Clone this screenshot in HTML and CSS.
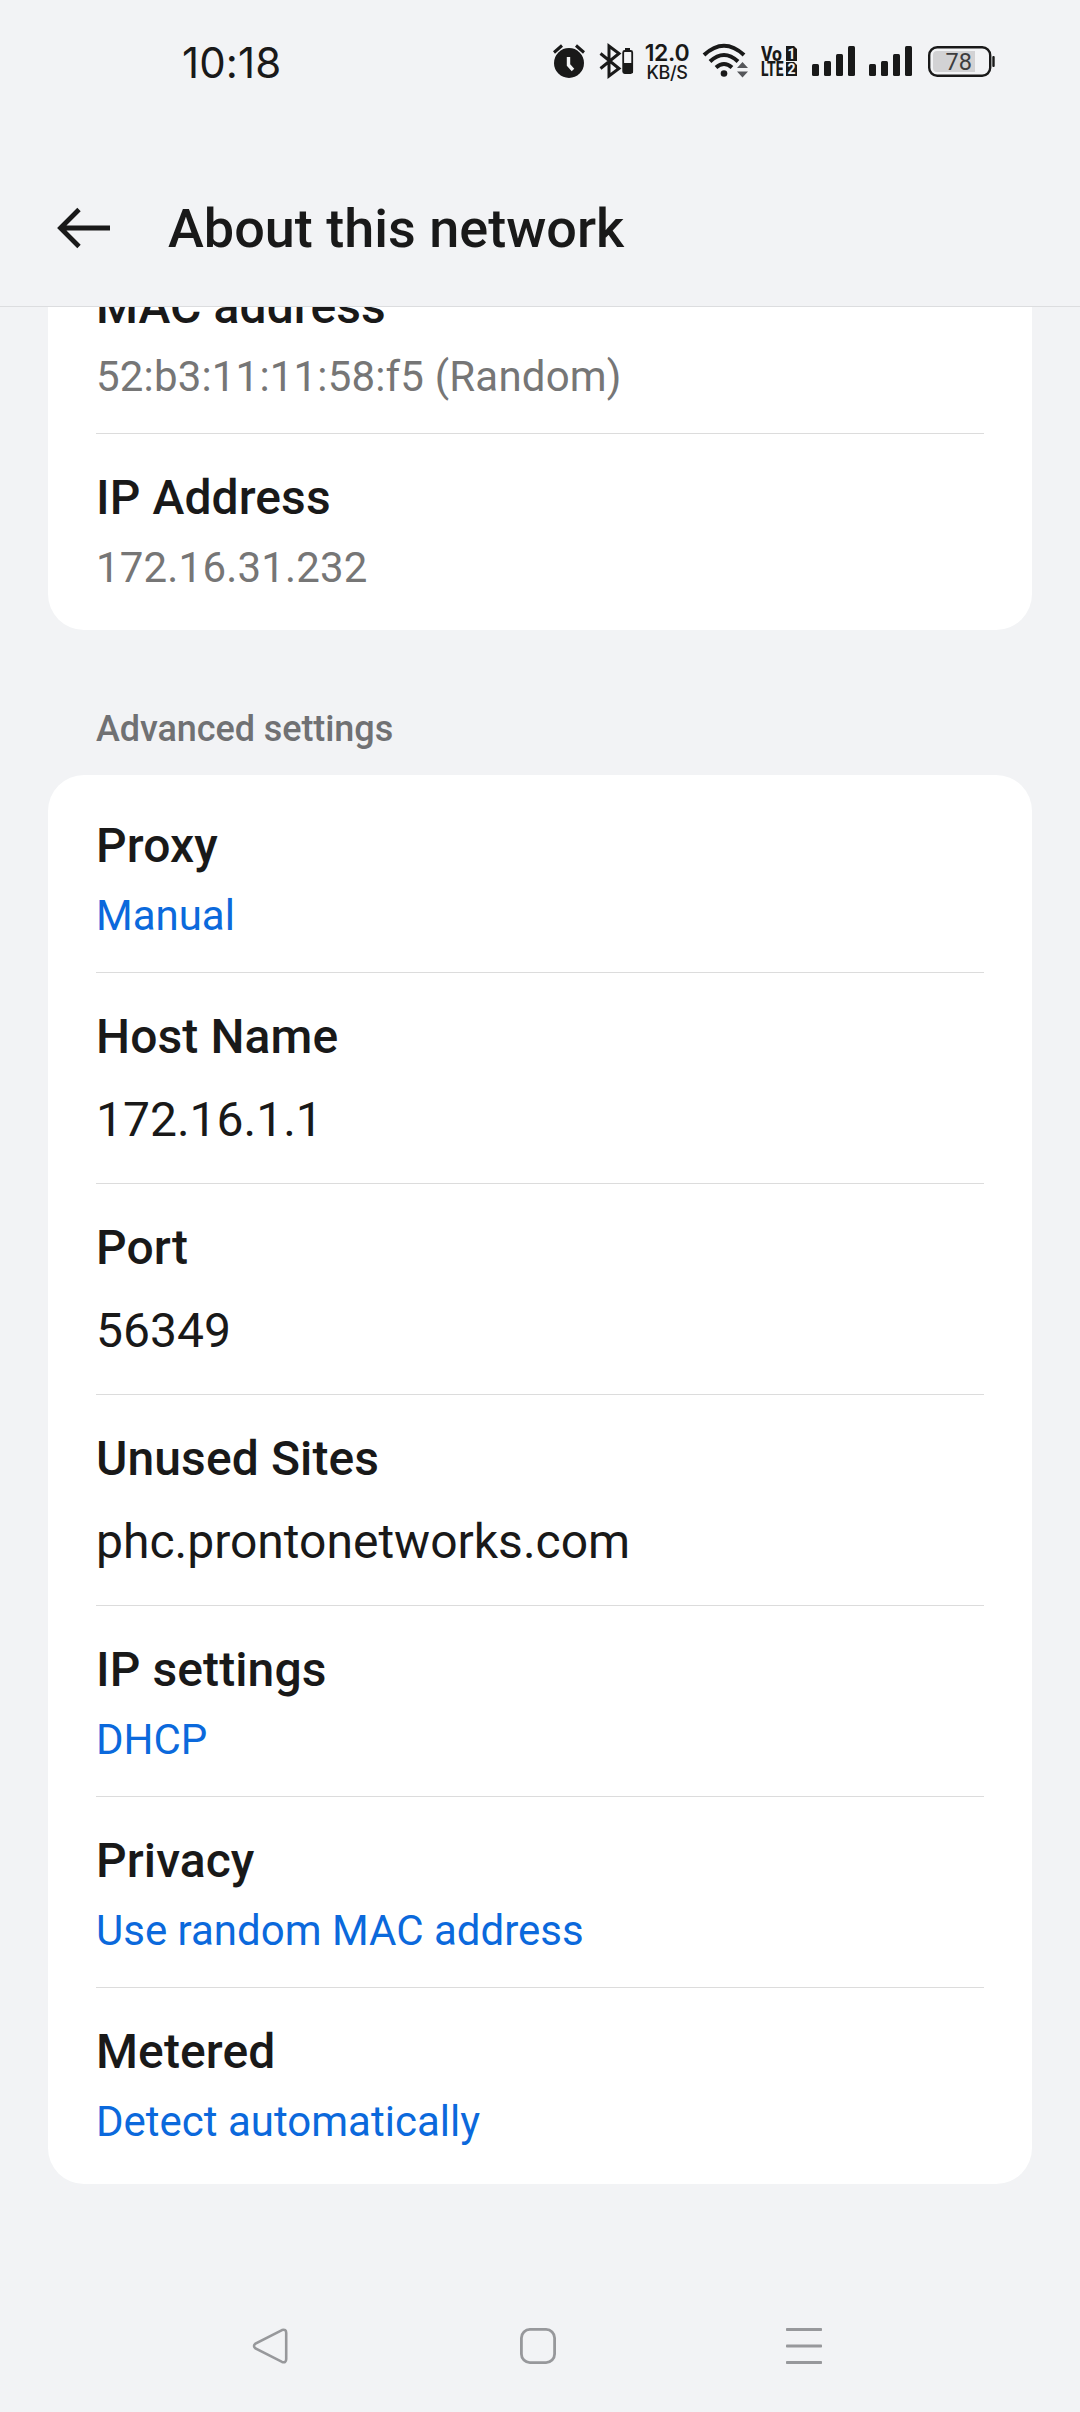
FILE: index.html
```html
<!DOCTYPE html>
<html lang="en">
<head>
<meta charset="utf-8">
<title>About this network</title>
<link rel="stylesheet" href="styles.css">
</head>
<body>
<div class="screen">
  <header class="status">
    <div class="clock">10:18</div>
    <div class="status-icons">
      <svg class="ic-alarm" width="34" height="40" viewBox="0 0 34 40" fill="none">
        <circle cx="17" cy="23" r="15" fill="#191919"/>
        <path d="M2 12.5 10 5.500M24 5.500 32 12.500" stroke="#191919" stroke-width="3"/>
        <path d="M16.500 17v8l4.500 5" stroke="#f2f3f5" stroke-width="3.400"/>
      </svg>
      <svg class="ic-bt" width="36" height="40" viewBox="0 0 36 40" fill="none">
        <path d="M1.500 13.500 20 28.500 10 36V6L20 13.500 1.500 28.500" stroke="#191919" stroke-width="3"/>
        <path d="M26 8h5v3h-5z" fill="#191919"/>
        <rect x="24.200" y="11" width="9" height="22" rx="1.500" stroke="#191919" stroke-width="1.800"/>
        <path d="M24 23h10v10H24z" fill="#191919"/>
      </svg>
      <div class="speed"><span class="speed-num">12.0</span><span class="speed-unit">KB/S</span></div>
      <svg class="ic-wifi" width="46" height="40" viewBox="0 0 46 40" fill="none">
        <path d="M2 15Q22 -3.500 42 15M8 21.500Q22 8.500 36 21.500M14 27.500Q22 20.500 30 27.500" stroke="#191919" stroke-width="4"/>
        <circle cx="22" cy="33.500" r="3.300" fill="#191919"/>
        <path d="M35 28l5.500-6 5.500 6zM35 31.500l5.500 6 5.500-6z" fill="#55565a"/>
      </svg>
      <svg class="ic-volte" width="36" height="40" viewBox="0 0 36 40">
        <text class="volte-text" x="0" y="20.500" textLength="21" lengthAdjust="spacingAndGlyphs">Vo</text>
        <text class="volte-text" x="0" y="36" textLength="22.500" lengthAdjust="spacingAndGlyphs">LTE</text>
        <path d="M25 6h8l3 3v12H25zM25 22h8l3 3v11H25z" fill="#191919"/>
        <text class="sim-text" x="30.500" y="18.500">1</text>
        <text class="sim-text" x="30.500" y="34">2</text>
      </svg>
      <svg class="ic-signal" width="43" height="40" viewBox="0 0 43 40" fill="#191919">
        <rect x="0" y="24" width="7" height="12" rx="1.500"/><rect x="12" y="21" width="7" height="15" rx="1.500"/><rect x="24" y="14" width="7" height="22" rx="1.500"/><rect x="36" y="6" width="7" height="30" rx="1.500"/>
      </svg>
      <svg class="ic-signal" width="43" height="40" viewBox="0 0 43 40" fill="#191919">
        <rect x="0" y="24" width="7" height="12" rx="1.500"/><rect x="12" y="21" width="7" height="15" rx="1.500"/><rect x="24" y="14" width="7" height="22" rx="1.500"/><rect x="36" y="6" width="7" height="30" rx="1.500"/>
      </svg>
      <svg class="ic-battery" width="67" height="40" viewBox="0 0 67 40">
        <rect x="1.200" y="7.200" width="61" height="28.600" rx="8" fill="none" stroke="#191919" stroke-width="2.400"/>
        <path d="M9 11h38v21H9a4 4 0 0 1-4-4V15a4 4 0 0 1 4-4z" fill="#d2d2d4"/>
        <rect x="64.300" y="16" width="2.400" height="11" rx="1" fill="#191919"/>
        <text class="battery-text" x="30.700" y="30">78</text>
      </svg>
    </div>
  </header>

  <div class="appbar">
    <svg class="back" width="54" height="44" viewBox="0 0 54 44" fill="none" stroke="#191919" stroke-width="4.800">
      <path d="M3 22H53M22 3.500 3.500 22 22 40.500"/>
    </svg>
    <h1 class="title">About this network</h1>
  </div>

  <main class="content">
    <section class="card card-scrolled">
      <div class="row"><div class="label">MAC address</div><div class="sub">52:b3:11:11:58:f5 (Random)</div></div>
      <div class="row"><div class="label">IP Address</div><div class="sub">172.16.31.232</div></div>
    </section>
    <h2 class="section">Advanced settings</h2>
    <section class="card">
      <div class="row"><div class="label">Proxy</div><div class="sub link">Manual</div></div>
      <div class="row row-field"><div class="label">Host Name</div><div class="value">172.16.1.1</div></div>
      <div class="row row-field"><div class="label">Port</div><div class="value">56349</div></div>
      <div class="row row-field"><div class="label">Unused Sites</div><div class="value">phc.prontonetworks.com</div></div>
      <div class="row"><div class="label">IP settings</div><div class="sub link">DHCP</div></div>
      <div class="row"><div class="label">Privacy</div><div class="sub link">Use random MAC address</div></div>
      <div class="row"><div class="label">Metered</div><div class="sub link">Detect automatically</div></div>
    </section>
  </main>

  <nav class="navbar">
    <svg width="36" height="36" viewBox="0 0 36 36" fill="none" stroke="#97989b" stroke-width="2.600">
      <path d="M30 2.100 3.500 15.600Q.500 18 3.500 20.400L30 33.900Q34.200 35.200 34.200 31V5Q34.200 .8 30 2.100z"/>
    </svg>
    <svg width="36" height="36" viewBox="0 0 36 36" fill="none" stroke="#97989b" stroke-width="2.800">
      <rect x="1.400" y="1.400" width="33.200" height="33.200" rx="8.500"/>
    </svg>
    <svg width="36" height="36" viewBox="0 0 36 36" fill="#97989b">
      <rect width="36" height="3" rx=".8"/><rect y="16.400" width="36" height="3.200" rx=".8"/><rect y="33" width="36" height="3" rx=".8"/>
    </svg>
  </nav>
</div>
</body>
</html>
```
FILE: styles.css
```css
* { box-sizing: border-box; }

body {
  margin: 0;
  background: #f2f3f5;
  color: #191919;
  font-family: Roboto, "Noto Sans", sans-serif;
}

.screen {
  display: flex;
  flex-direction: column;
  width: 1080px;
  height: 2412px;
  overflow: hidden;
}

svg { display: block; flex: none; }

.status {
  display: flex;
  justify-content: space-between;
  height: 150px;
  padding: 40px 85px 0 182px;
}

.clock {
  height: 45px;
  line-height: 45px;
  font-family: Inter, Roboto, sans-serif;
  font-size: 42px;
  letter-spacing: 0.1px;
}

.status-icons { display: flex; height: 40px; }
.ic-bt { margin-left: 13px; }
.speed {
  display: flex;
  flex-direction: column;
  align-items: center;
  width: 46px;
  margin-left: 9px;
  white-space: nowrap;
  font-family: Inter, Roboto, sans-serif;
}
.speed-num { height: 22px; line-height: 27px; font-size: 23px; font-weight: 600; letter-spacing: -0.3px; }
.speed-unit { height: 18px; line-height: 22px; font-size: 18px; font-weight: 500; letter-spacing: -0.4px; }
.ic-wifi { margin-left: 12px; }
.ic-volte { margin-left: 13px; }
.ic-signal { margin-left: 14px; }
.ic-volte + .ic-signal { margin-left: 15px; }
.ic-battery { margin-left: 16px; }

.volte-text { font-size: 20px; font-weight: 800; fill: #191919; }
.sim-text { font-size: 14px; font-weight: 700; fill: #f2f3f5; text-anchor: middle; }
.battery-text { font-size: 23.5px; fill: #3c3c3e; text-anchor: middle; }

.appbar {
  display: flex;
  align-items: center;
  height: 157px;
  padding: 0 57px 1px;
  border-bottom: 1px solid #dcdddf;
}
.title {
  margin: 2px 0 0 57px;
  font-size: 54px;
  line-height: 64px;
  font-weight: 500;
}

.content {
  flex: 1;
  overflow: hidden;
  padding: 0 48px;
}
.card {
  padding: 6px 48px;
  border-radius: 36px;
  background: #fff;
}
.card-scrolled { margin-top: -71px; }

.row {
  height: 191px;
  padding-top: 36px;
  border-top: 1px solid #dcdcdc;
}
.row:first-child { border-top-color: transparent; }
.row-field { height: 211px; }

.label { font-size: 48px; line-height: 56px; font-weight: 500; letter-spacing: 0.1px; }
.sub { margin-top: 17px; font-size: 42px; line-height: 50px; letter-spacing: 0.18px; color: #767676; }
.sub.link { color: #0b69dc; letter-spacing: 0; }
.value { margin-top: 27px; font-size: 48px; line-height: 56px; }

.section {
  height: 145px;
  margin: 0;
  padding: 78px 48px 0;
  font-size: 36px;
  line-height: 42px;
  font-weight: 500;
  letter-spacing: -0.08px;
  color: #707173;
}

.navbar {
  display: flex;
  gap: 231px;
  height: 136px;
  padding: 52px 0 0 252px;
}
.navbar svg:nth-child(2) { margin: 0 -1px 0 1px; }
```
